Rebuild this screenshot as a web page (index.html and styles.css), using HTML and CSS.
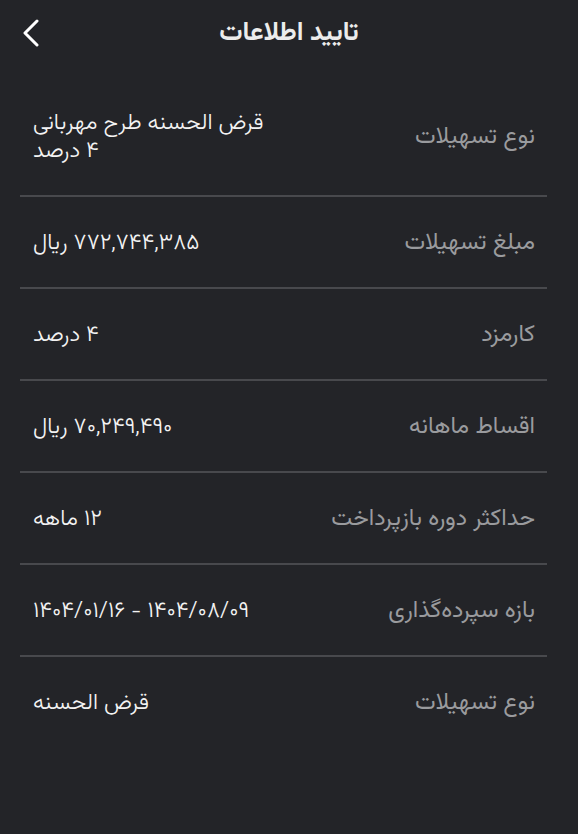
FILE: index.html
```html
<!DOCTYPE html>
<html lang="fa" dir="rtl">
<head>
    <meta charset="UTF-8">
    <meta name="viewport" content="width=device-width, initial-scale=1.0">
    <title>تایید اطلاعات</title>
    <link rel="stylesheet" href="styles.css">
</head>
<body>
    <div class="header">
        <h1>تایید اطلاعات</h1>
        <button class="back-btn" aria-label="بازگشت">
            <svg width="18" height="28" viewBox="0 0 18 28">
                <path d="M15 2 L3 14 L15 26" fill="none" stroke="#fff" stroke-width="3" stroke-linecap="round" stroke-linejoin="round"/>
            </svg>
        </button>
    </div>

    <div class="info-list">
        <div class="info-row">
            <span class="label">نوع تسهیلات</span>
            <span class="value">قرض الحسنه طرح مهربانی ۴&nbsp;درصد</span>
        </div>
        <div class="info-row">
            <span class="label">مبلغ تسهیلات</span>
            <span class="value">۷۷۲,۷۴۴,۳۸۵ ریال</span>
        </div>
        <div class="info-row">
            <span class="label">کارمزد</span>
            <span class="value">۴ درصد</span>
        </div>
        <div class="info-row">
            <span class="label">اقساط ماهانه</span>
            <span class="value">۷۰,۲۴۹,۴۹۰ ریال</span>
        </div>
        <div class="info-row">
            <span class="label">حداکثر دوره بازپرداخت</span>
            <span class="value">۱۲ ماهه</span>
        </div>
        <div class="info-row">
            <span class="label">بازه سپرده‌گذاری</span>
            <span class="value">۱۴۰۴/۰۸/۰۹ - ۱۴۰۴/۰۱/۱۶</span>
        </div>
        <div class="info-row">
            <span class="label">نوع تسهیلات</span>
            <span class="value">قرض الحسنه</span>
        </div>
    </div>
</body>
</html>
```

FILE: styles.css
```css
body {
    margin: 0;
    min-height: 100vh;
    background-color: #232428;
    color: #f1f1f1;
    font-family: "Vazirmatn", "Noto Sans Arabic", "DejaVu Sans", sans-serif;
}

/* --- Header --- */
.header {
    position: relative;
    height: 66px;
    display: flex;
    align-items: center;
    justify-content: center;
}

.header h1 {
    margin: 0;
    font-size: 26px;
    font-weight: bold;
    color: #ececec;
}

.back-btn {
    position: absolute;
    left: 22px;
    top: 19px;
    background: none;
    border: none;
    padding: 0;
    cursor: pointer;
}

/* --- Lista --- */
.info-list {
    margin: 11px 31px 0 20px;
}

.info-row {
    display: flex;
    justify-content: space-between;
    align-items: center;
    padding: 33px 12px 29px 13px;
    border-bottom: 2px solid #48494d;
}

.info-row:last-child {
    border-bottom: none;
}

.label {
    font-size: 23.5px;
    color: #9a9b9e;
    line-height: 28px;
}

.value {
    font-size: 22.5px;
    font-weight: 300;
    color: #f3f3f3;
    line-height: 28px;
    max-width: 255px;
    text-align: left;
}
```
